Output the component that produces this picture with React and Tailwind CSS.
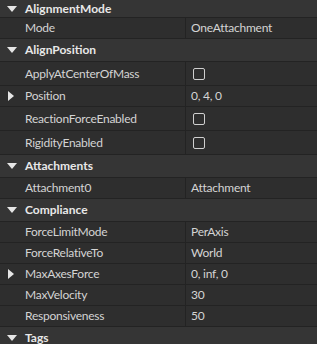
import React from "react";

const rows = [
  { t: "h", name: "AlignmentMode", first: true },
  { t: "r", name: "Mode", value: "OneAttachment" },
  { t: "h", name: "AlignPosition" },
  { t: "c", name: "ApplyAtCenterOfMass" },
  { t: "r", name: "Position", value: "0, 4, 0", expand: true },
  { t: "c", name: "ReactionForceEnabled" },
  { t: "c", name: "RigidityEnabled" },
  { t: "h", name: "Attachments" },
  { t: "r", name: "Attachment0", value: "Attachment" },
  { t: "h", name: "Compliance" },
  { t: "r", name: "ForceLimitMode", value: "PerAxis" },
  { t: "r", name: "ForceRelativeTo", value: "World" },
  { t: "r", name: "MaxAxesForce", value: "0, inf, 0", expand: true },
  { t: "r", name: "MaxVelocity", value: "30" },
  { t: "r", name: "Responsiveness", value: "50" },
  { t: "h", name: "Tags" },
];

function Down() {
  return (
    <svg width="10" height="6" viewBox="0 0 10 6" className="block">
      <path d="M0 0 H10 L5 6 Z" fill="#e6e6e6" />
    </svg>
  );
}
function Right() {
  return (
    <svg width="6" height="10" viewBox="0 0 6 10" className="block">
      <path d="M0 0 L6 5 L0 10 Z" fill="#e6e6e6" />
    </svg>
  );
}

export default function App() {
  return (
    <div
      className="w-[317px] h-[344px] overflow-hidden bg-[#2e2e2e] text-[12px] leading-none"
      style={{ fontFamily: "Lato, 'Noto Sans', sans-serif" }}
    >
      {rows.map((r, i) => {
        if (r.t === "h") {
          return (
            <div
              key={i}
              className={`flex items-center bg-[#353535] border-b border-[#232323] ${r.first ? "h-[18px]" : "h-[23px]"}`}
            >
              <div className="w-[25px] flex justify-center pl-[1px] pr-[2px]">
                <Down />
              </div>
              <span className="font-bold text-[#e8e8e8]">{r.name}</span>
            </div>
          );
        }
        const h = r.t === "c" ? "h-[24px]" : "h-[21px]";
        return (
          <div key={i} className={`flex ${h} border-b border-[#232323] bg-[#2e2e2e]`}>
            <div className="w-[186px] flex items-center border-r border-[#232323]">
              <div className="w-[25px] flex justify-center pr-[3px]">
                {r.expand ? <Right /> : null}
              </div>
              <span className="text-[#d4d4d4] tracking-[-0.25px]">{r.name}</span>
            </div>
            <div className="flex-1 flex items-center pl-[5px]">
              {r.t === "c" ? (
                <div className="ml-[2px] w-[12px] h-[12px] rounded-[2px] border border-[#cfcfcf]" />
              ) : (
                <span className="text-[#d4d4d4] tracking-[-0.25px]">{r.value}</span>
              )}
            </div>
          </div>
        );
      })}
    </div>
  );
}
